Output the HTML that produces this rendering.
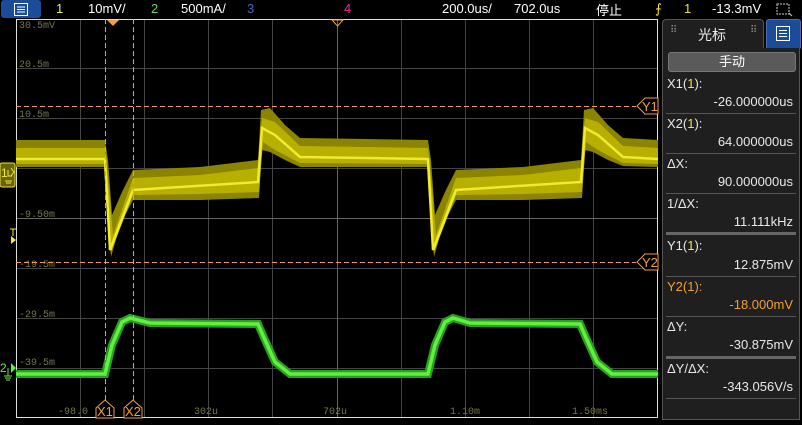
<!DOCTYPE html>
<html><head><meta charset="utf-8"><style>
body{margin:0;width:802px;height:425px;background:#000;overflow:hidden;font-family:"Liberation Sans","Noto Sans CJK SC",sans-serif;position:relative}
.t{position:absolute;top:1px;font-size:13px;color:#fff;white-space:nowrap}
.panel{position:absolute;left:662px;top:48px;width:136px;height:371px;background:#1f1f1f;border:1px solid #555;border-top:none}
.lab{position:absolute;left:4px;font-size:13px;color:#e8e8e8}
.val{position:absolute;right:6px;font-size:13px;color:#e8e8e8;text-align:right}
.sep{position:absolute;left:3px;right:3px;height:1px;background:#555}
</style></head><body>
<div style="position:absolute;left:1px;top:0;width:40px;height:18px;background:#1c4c98;border-radius:3px"></div>
<svg style="position:absolute;left:14px;top:3px" width="14" height="13"><rect x="0.5" y="0.5" width="13" height="12" fill="none" stroke="#fff"/><path d="M3 4h8M3 6.5h8M3 9h8" stroke="#fff"/></svg>
<div class="t" style="left:56px;color:#e6f060">1</div>
<div class="t" style="left:88px">10mV/</div>
<div class="t" style="left:151px;color:#6cd860">2</div>
<div class="t" style="left:181px">500mA/</div>
<div class="t" style="left:247px;color:#5060c0">3</div>
<div class="t" style="left:344px;color:#e03090">4</div>
<div class="t" style="left:442px">200.0us/</div>
<div class="t" style="left:514px">702.0us</div>
<div class="t" style="left:596px;top:0">停止</div>
<div class="t" style="left:655px;color:#f0e020">⨍</div>
<div class="t" style="left:684px;color:#f0e020">1</div>
<div class="t" style="left:712px">-13.3mV</div>
<svg style="position:absolute;left:776px;top:3px" width="18" height="14"><rect x="1" y="1" width="12" height="10" fill="none" stroke="#ccc" stroke-dasharray="2 1"/><path d="M13 10l3 3" stroke="#ccc"/></svg>

<svg style="position:absolute;left:0;top:0" width="660" height="425">
<g stroke="#444" stroke-width="1">
<path d="M80.5 19V418M144.5 19V418M208.5 19V418M272.5 19V418M401.5 19V418M465.5 19V418M529.5 19V418M593.5 19V418"/>
<path d="M16 68.5H658M16 118.5H658M16 168.5H658M16 268.5H658M16 318.5H658M16 368.5H658"/>
<path d="M16 218.5H658M337.5 19V418" stroke="#666"/>
</g>
<rect x="16.5" y="19.5" width="641" height="398" fill="none" stroke="#ddd"/>
<g font-family="Liberation Mono,monospace" font-size="10" fill="#777450">
<text x="19" y="28">30.5mV</text><text x="19" y="67">20.5m</text><text x="19" y="117">10.5m</text><text x="19" y="167">500u</text><text x="19" y="217">-9.50m</text><text x="19" y="267">-19.5m</text><text x="19" y="317">-29.5m</text><text x="19" y="365">-39.5m</text>
<text x="58" y="414">-98.0</text><text x="194" y="414">302u</text><text x="323" y="414">702u</text><text x="450" y="414">1.10m</text><text x="572" y="414">1.50ms</text>
</g>
<!-- ch1 band -->
<polygon fill="#8a8400" points="16,140 105,140 108,160 112,215 122,192 133,170 200,167 258,160 261,110 270,108 285,125 300,138 428,140 431,160 435,215 445,192 456,170 523,167 581,160 584,110 593,108 608,125 623,138 658,140 658,167 623,166 608,160 593,152 585,150 582,198 523,200 456,200 443,225 434,257 429,200 427,167 300,167 285,160 270,152 262,150 259,198 200,200 133,200 120,225 111,257 106,200 104,167 16,167"/>
<polygon fill="#b8b000" points="16,148 105,148 110,200 113,235 133,178 200,175 258,168 262,118 275,122 300,146 428,148 433,200 436,235 456,178 523,175 581,168 585,118 598,122 623,146 658,148 658,164 623,163 598,150 586,142 582,192 523,194 456,195 434,252 430,200 427,164 300,163 275,150 263,142 259,192 200,194 133,195 111,252 107,200 104,164 16,164"/>
<path fill="none" stroke="#f0ea30" stroke-width="2.5" stroke-linejoin="miter" d="M16 159L105 159L110 250L133 190L258 182L262 128L275 135L300 157L428 159L433 250L456 190L581 182L585 128L598 135L623 157L658 159"/>
<!-- ch2 -->
<g fill="none" stroke-linejoin="miter">
<path d="M16 374L105 374L112 345L122 322L130 318L150 323L258 324L265 340L275 362L290 374L428 374L435 345L445 322L453 318L470 323L580 324L587 340L597 362L612 374L658 374" stroke="#2aa020" stroke-width="8"/>
<path d="M16 374L105 374L112 345L122 322L130 318L150 323L258 324L265 340L275 362L290 374L428 374L435 345L445 322L453 318L470 323L580 324L587 340L597 362L612 374L658 374" stroke="#60f040" stroke-width="3.5"/>
</g>
<!-- cursors -->
<g stroke="#f0a040" stroke-dasharray="5 3" stroke-width="1">
<path d="M105.5 19V400M133.5 19V400M16 106.5H636M16 262.5H636"/>
</g>
<g fill="#000" stroke="#f0a040" font-size="13" font-family="Liberation Sans,sans-serif">
<path d="M658 98H645L637 106L645 114H658Z"/><path d="M658 254H645L637 262L645 270H658Z"/>
<path d="M96 418V408L105 400L114 408V418Z"/><path d="M124 418V408L133 400L142 408V418Z"/>
<text x="642" y="111" fill="#f0a040" stroke="none">Y1</text><text x="642" y="267" fill="#f0a040" stroke="none">Y2</text>
<text x="97" y="416" fill="#f0a040" stroke="none">X1</text><text x="125" y="416" fill="#f0a040" stroke="none">X2</text>
</g>
<path d="M107 20H119L113 26Z" fill="#f0a040"/>
<path d="M332 20H343L337.5 26Z" fill="none" stroke="#f0a040"/>
<!-- ch markers -->
<rect x="0" y="163" width="15" height="24" rx="2" fill="#6a6400" stroke="#e8e040"/>
<text x="1" y="177" font-size="12" fill="#f0ea40">1</text>
<path d="M8 170v6h4M11 168l3 4-3 4M5 181h7M6 183h5" stroke="#f0ea40" fill="none"/>
<path d="M10 229h6M13 229v7" stroke="#f0ea40"/><path d="M11 236L16 240L11 244Z" fill="#f0ea40"/>
<text x="0" y="372" font-size="12" fill="#60f040">2</text>
<path d="M11 363L16 368L11 373Z" fill="#60f040"/><path d="M8 368v8M4 376h8M5 378h6M6 380h4" stroke="#60f040" fill="none"/>
</svg>

<div style="position:absolute;left:662px;top:19px;width:100px;height:29px;background:#1f1f1f;border:1px solid #555;border-bottom:none;border-radius:4px 4px 0 0"></div>
<div style="position:absolute;left:670px;top:25px;font-size:10px;color:#888">⠿</div>
<div style="position:absolute;left:698px;top:25px;font-size:14px;color:#eee">光标</div>
<div style="position:absolute;left:750px;top:25px;font-size:10px;color:#888">⠿</div>
<div style="position:absolute;left:766px;top:19px;width:33px;height:29px;background:#1c4c98;border:1px solid #4a70b0;border-radius:3px"></div>
<svg style="position:absolute;left:776px;top:26px" width="14" height="15"><rect x="0.5" y="0.5" width="13" height="14" fill="none" stroke="#fff"/><path d="M3 4.5h8M3 7.5h8M3 10.5h8" stroke="#fff"/></svg>
<div class="panel">
<div style="position:absolute;left:5px;top:4px;width:126px;height:18px;background:#5a5a5a;border-radius:3px;border:1px solid #777;color:#fff;font-size:13px;text-align:center;line-height:18px">手动</div>
<div class="lab" style="top:28px">X1(<span style="color:#f0ea40">1</span>):</div><div class="val" style="top:46px">-26.000000us</div><div class="sep" style="top:65px"></div>
<div class="lab" style="top:68px">X2(<span style="color:#f0ea40">1</span>):</div><div class="val" style="top:86px">64.000000us</div><div class="sep" style="top:105px"></div>
<div class="lab" style="top:108px">ΔX:</div><div class="val" style="top:126px">90.000000us</div><div class="sep" style="top:145px"></div>
<div class="lab" style="top:148px">1/ΔX:</div><div class="val" style="top:166px">11.111kHz</div><div class="sep" style="top:184px;height:3px;background:#666"></div>
<div class="lab" style="top:190px">Y1(<span style="color:#f0ea40">1</span>):</div><div class="val" style="top:209px">12.875mV</div><div class="sep" style="top:228px"></div>
<div class="lab" style="top:231px;color:#f0a030">Y2(1):</div><div class="val" style="top:249px;color:#f0a030">-18.000mV</div><div class="sep" style="top:268px"></div>
<div class="lab" style="top:271px">ΔY:</div><div class="val" style="top:289px">-30.875mV</div><div class="sep" style="top:308px;height:3px;background:#666"></div>
<div class="lab" style="top:313px">ΔY/ΔX:</div><div class="val" style="top:331px">-343.056V/s</div><div class="sep" style="top:350px"></div>
</div>
</body></html>
